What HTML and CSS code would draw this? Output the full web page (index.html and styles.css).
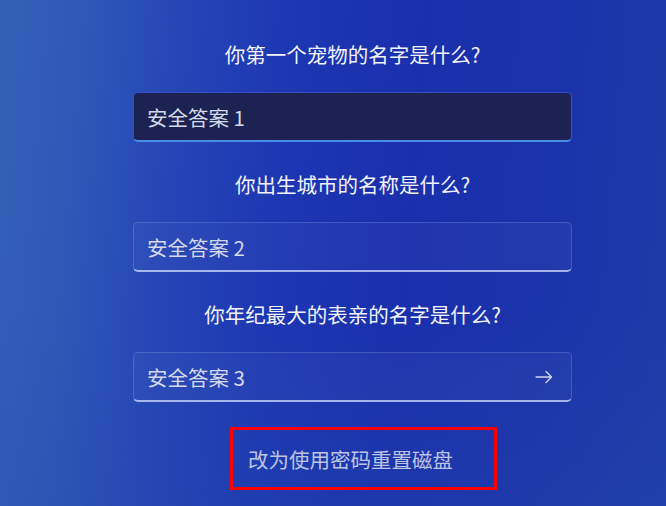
FILE: index.html
```
<!DOCTYPE html>
<html lang="zh">
<head>
<meta charset="utf-8">
<link rel="stylesheet" href="styles.css">
</head>
<body>
<main class="screen">
  <section class="form">
    <div class="question">你第一个宠物的名字是什么?</div>
    <div class="field field-active"><span class="placeholder">安全答案 1</span></div>
    <div class="question">你出生城市的名称是什么?</div>
    <div class="field"><span class="placeholder">安全答案 2</span></div>
    <div class="question">你年纪最大的表亲的名字是什么?</div>
    <div class="field"><span class="placeholder">安全答案 3</span>
      <svg class="arrow" width="18" height="14" viewBox="0 0 18 14"><path d="M1 7 H16.5 M11 1.5 L16.5 7 L11 12.5" fill="none" stroke="#d4d8ee" stroke-width="1.3" stroke-linecap="round" stroke-linejoin="round"/></svg>
    </div>
    <div class="link-box"><span class="link">改为使用密码重置磁盘</span></div>
  </section>
</main>
</body>
</html>
```
FILE: styles.css
```
html, body {
  margin: 0;
  padding: 0;
}
body {
  width: 666px;
  height: 506px;
  overflow: hidden;
  font-family: "Noto Sans CJK SC", "Noto Sans", sans-serif;
}
.screen {
  width: 666px;
  height: 506px;
  background:
    linear-gradient(180deg, rgba(0,0,0,0) 60%, rgba(40,80,170,0.25) 100%),
    linear-gradient(95deg, #3361b6 0%, #2f58b8 12%, #2645b6 26%, #1d36b2 42%, #1a2fac 60%, #1b33aa 80%, #1f3aa8 100%);
  padding-top: 40px;
  box-sizing: border-box;
}
.form {
  margin-left: 133px;
  width: 439px;
  display: flex;
  flex-direction: column;
}
.question {
  height: 28px;
  line-height: 28px;
  font-size: 20.5px;
  color: #f2f3fa;
  text-align: center;
  margin-bottom: 24px;
}
.field {
  height: 50px;
  box-sizing: border-box;
  border: 1px solid rgba(200,210,255,0.2);
  border-bottom: 2px solid rgba(210,220,255,0.75);
  border-radius: 5px;
  background: rgba(255,255,255,0.03);
  display: flex;
  align-items: center;
  justify-content: space-between;
  padding: 0 18px 0 13px;
  margin-bottom: 28px;
}
.field-active {
  background: #1c2352;
  border-color: #3550c4;
  border-bottom: 2px solid #4a8ce8;
}
.placeholder {
  font-size: 20.5px;
  color: #d6d9ea;
}
.arrow {
  display: block;
}
.link-box {
  align-self: flex-start;
  margin-left: 97px;
  margin-top: -3px;
  border: 3px solid #ff0000;
  height: 63px;
  box-sizing: border-box;
  width: 267px;
  display: flex;
  align-items: center;
  padding-left: 15px;
}
.link {
  font-size: 20.5px;
  color: #bcc4e4;
}
```
